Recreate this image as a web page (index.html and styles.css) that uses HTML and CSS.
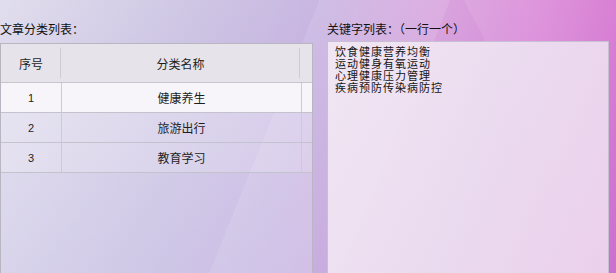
FILE: index.html
```html
<!DOCTYPE html>
<html lang="zh">
<head>
<meta charset="utf-8">
<link rel="stylesheet" href="styles.css">
</head>
<body>
<div class="page">
  <section class="left">
    <div class="label">文章分类列表：</div>
    <div class="grid">
      <div class="row head">
        <div class="cell c1">序号</div>
        <div class="cell c2">分类名称</div>
        <div class="cell c3"></div>
      </div>
      <div class="row sel">
        <div class="cell c1 num">1</div>
        <div class="cell c2">健康养生</div>
        <div class="cell c3"></div>
      </div>
      <div class="row">
        <div class="cell c1 num">2</div>
        <div class="cell c2">旅游出行</div>
        <div class="cell c3"></div>
      </div>
      <div class="row">
        <div class="cell c1 num">3</div>
        <div class="cell c2">教育学习</div>
        <div class="cell c3"></div>
      </div>
    </div>
  </section>
  <section class="right">
    <div class="label">关键字列表：（一行一个）</div>
    <div class="textbox">
      <div class="line">饮食健康营养均衡</div>
      <div class="line">运动健身有氧运动</div>
      <div class="line">心理健康压力管理</div>
      <div class="line">疾病预防传染病防控</div>
    </div>
  </section>
</div>
</body>
</html>
```
FILE: styles.css
```css
html, body {
  margin: 0;
  padding: 0;
  width: 616px;
  height: 273px;
  overflow: hidden;
}
body {
  font-family: "Noto Sans CJK SC", "Noto Sans", sans-serif;
  font-size: 12px;
  color: #1e1e1e;
  background:
    linear-gradient(112deg, rgba(255,255,255,0) 0%, rgba(255,255,255,0) 44%, rgba(255,255,255,0.10) 44%, rgba(255,255,255,0.10) 62%, rgba(255,255,255,0) 62%),
    linear-gradient(62deg, rgba(255,255,255,0) 0%, rgba(255,255,255,0) 80%, rgba(255,255,255,0.08) 80%),
    linear-gradient(to bottom, rgba(255,255,255,0.06) 0%, rgba(140,130,210,0.16) 100%),
    linear-gradient(100deg, #dfdcec 0%, #cbc2e2 30%, #c6b2e0 48%, #d6a0dc 66%, #d984d6 82%, #d05ec8 100%);
}
.page {
  display: flex;
  height: 273px;
}
.left {
  width: 313px;
  display: flex;
  flex-direction: column;
}
.right {
  width: 282px;
  margin-left: 14px;
  display: flex;
  flex-direction: column;
}
.label {
  padding-top: 21px;
  height: 20px;
  line-height: 15px;
  font-size: 12px;
  color: #111;
  white-space: nowrap;
}
.grid {
  flex: 1;
  margin-top: 2px;
  border: 1px solid #b9b6c2;
  border-bottom: none;
  background: rgba(255,255,255,0.22);
}
.row {
  display: flex;
  height: 29px;
  border-bottom: 1px solid #c4c2cc;
  background: rgba(255,255,255,0.18);
}
.row.head {
  height: 38px;
  background: #e6e4ea;
  border-bottom: 1px solid #c8c6cc;
}
.row.sel {
  background: #f7f5f9;
}
.cell {
  display: flex;
  align-items: center;
  justify-content: center;
  border-right: 1px solid #cdcbd2;
}
.head .cell {
  border-right: none;
}
.head .c1, .head .c2 {
  background: linear-gradient(#cfcdd4, #cfcdd4) right center / 1px 30px no-repeat;
}
.c1 { width: 60px; }
.c2 { width: 239px; }
.c3 { flex: 1; border-right: none; }
.num {
  font-family: "Liberation Sans", sans-serif;
  font-size: 11px;
}
.textbox {
  flex: 1;
  border: 1px solid #c9bfd2;
  border-bottom: none;
  background: linear-gradient(115deg, rgba(242,232,244,0.96) 0%, rgba(236,222,240,0.94) 60%, rgba(238,214,238,0.94) 100%);
  padding: 3px 6px 0 7px;
  color: #151515;
}
.line {
  font-size: 11px;
  line-height: 12px;
  height: 12px;
  letter-spacing: 1px;
  white-space: nowrap;
}
```
